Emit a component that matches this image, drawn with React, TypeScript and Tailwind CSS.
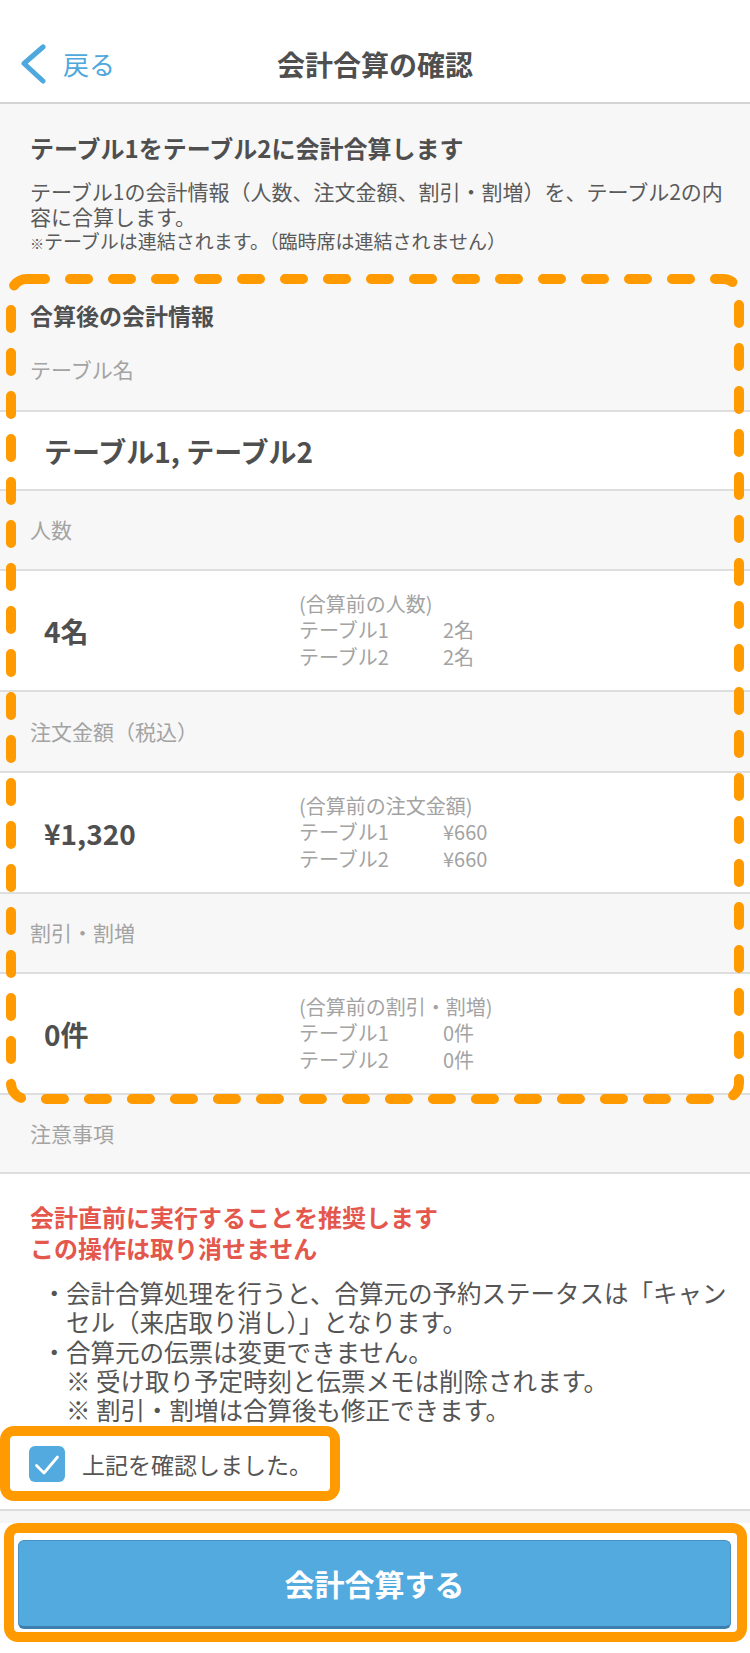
import { ReactNode } from "react";

const Label = ({ children, h }: { children: ReactNode; h: string }) => (
  <div className={`flex items-center border-t-2 border-[#dedede] bg-[#f7f7f7] pl-[30px] text-[21px] text-[#a3a3a3] ${h}`}>
    {children}
  </div>
);

type Before = { title: string; t1: string; t2: string };

const ValueRow = ({ value, before }: { value: string; before: Before }) => (
  <div className="flex h-[121px] items-center border-t-2 border-[#dedede] bg-white">
    <div className="w-[299px] pl-[44px] text-[28px] font-bold text-[#4f4f4f]">{value}</div>
    <div className="text-[20px] leading-[26.5px] text-[#a3a3a3]">
      <div>{before.title}</div>
      <div className="grid grid-cols-[144px_auto]">
        <span>テーブル1</span>
        <span>{before.t1}</span>
        <span>テーブル2</span>
        <span>{before.t2}</span>
      </div>
    </div>
  </div>
);

// annotation drawn over the merged-info block
const DashedFrame = () => (
  <svg
    className="pointer-events-none absolute left-0 top-[24px] overflow-visible"
    width="750"
    height="830"
  >
    <rect
      x="11"
      y="0"
      width="728"
      height="820"
      rx="16"
      fill="none"
      stroke="#ff9a00"
      strokeWidth="10"
      strokeLinecap="round"
      strokeDasharray="18 25"
    />
  </svg>
);

export default function App() {
  return (
    <div className="min-h-[1653px] w-[750px] bg-white font-['Noto_Sans_CJK_JP','Noto_Sans',sans-serif] text-[#4f4f4f]">
      {/* nav bar */}
      <header className="grid h-[104px] grid-cols-[1fr_auto_1fr] items-end border-b-2 border-[#d4d4d4] bg-white pb-[18px]">
        <div className="flex items-center pl-[20px] text-[#4ea8de]">
          <svg width="28" height="40" viewBox="0 0 28 40">
            <polyline
              points="23,3 4,19.5 23,37"
              fill="none"
              stroke="#4ea8de"
              strokeWidth="5"
              strokeLinecap="round"
              strokeLinejoin="round"
            />
          </svg>
          <span className="ml-[15px] text-[26px] leading-[40px]">戻る</span>
        </div>
        <h1 className="text-[28px] font-bold leading-[40px] text-[#4f4f4f]">会計合算の確認</h1>
        <div />
      </header>

      <section className="bg-[#f7f7f7] px-[30px] pt-[29px]">
        <h2 className="text-[24px] font-bold leading-[30px]">テーブル1をテーブル2に会計合算します</h2>
        <p className="mt-[16px] whitespace-nowrap text-[21px] leading-[25px] text-[#5a5a5a]">
          テーブル1の会計情報（人数、注文金額、割引・割増）を、テーブル2の内
          <br />
          容に合算します。
        </p>
        <p className="whitespace-nowrap text-[19px] leading-[24px] text-[#5a5a5a]">
          <span className="text-[14px]">※</span>テーブルは連結されます。（臨時席は連結されません）
        </p>
      </section>

      <div className="relative">
        <DashedFrame />
        <div className="bg-[#f7f7f7] px-[30px] pt-[45px] text-[23px] font-bold leading-[30px]">合算後の会計情報</div>
        <div className="flex h-[80px] items-center bg-[#f7f7f7] pl-[30px] text-[21px] text-[#a3a3a3]">テーブル名</div>
        <div className="flex h-[79px] items-center border-t-2 border-[#dedede] bg-white pl-[44px] text-[28px] font-bold text-[#4f4f4f]">
          テーブル1, テーブル2
        </div>
        <Label h="h-[80px]">人数</Label>
        <ValueRow value="4名" before={{ title: "(合算前の人数)", t1: "2名", t2: "2名" }} />
        <Label h="h-[81px]">注文金額（税込）</Label>
        <ValueRow value="¥1,320" before={{ title: "(合算前の注文金額)", t1: "¥660", t2: "¥660" }} />
        <Label h="h-[80px]">割引・割増</Label>
        <ValueRow value="0件" before={{ title: "(合算前の割引・割増)", t1: "0件", t2: "0件" }} />
      </div>

      <Label h="h-[79px]">注意事項</Label>

      <section className="border-t-2 border-[#dedede] bg-white pt-[27px]">
        <div className="px-[30px] text-[24px] font-bold leading-[31px] text-[#e4574c]">
          <p>会計直前に実行することを推奨します</p>
          <p>この操作は取り消せません</p>
        </div>
        <ul className="mt-[15px] whitespace-nowrap pl-[42px] text-[24.5px] leading-[29.3px] text-[#555555]">
          <li className="flex">
            <span className="w-[24px]">・</span>
            <span>
              会計合算処理を行うと、合算元の予約ステータスは「キャン
              <br />
              セル（来店取り消し）」となります。
            </span>
          </li>
          <li className="flex">
            <span className="w-[24px]">・</span>
            <span>
              合算元の伝票は変更できません。
              <br />※ 受け取り予定時刻と伝票メモは削除されます。
              <br />※ 割引・割増は合算後も修正できます。
            </span>
          </li>
        </ul>

        <label className="mt-[2px] flex h-[75px] w-[340px] items-center rounded-[14px] border-[10px] border-[#ff9a00] pl-[19px]">
          <span className="flex h-[36px] w-[36px] items-center justify-center rounded-[6px] bg-[#53aadf]">
            <svg width="36" height="36" viewBox="0 0 36 36">
              <polyline
                points="7.5,19.5 15,27 28.5,11"
                fill="none"
                stroke="white"
                strokeWidth="2.8"
                strokeLinecap="round"
                strokeLinejoin="round"
              />
            </svg>
          </span>
          <span className="ml-[17px] text-[23px] text-[#555555]">上記を確認しました。</span>
        </label>

        <div className="mt-[8px] h-[14px] border-t-2 border-[#dcdcdc] bg-[#f5f5f5]" />

        <div className="ml-[4px] h-[119px] w-[743px] rounded-[14px] border-[10px] border-[#ff9a00] bg-white pb-[3px] pl-[4px] pr-[6px] pt-[7px]">
          <button className="flex h-[89px] w-full items-center justify-center rounded-[6px] border border-b-[3px] border-[#4a90c2] border-b-[#3c7eae] bg-[#53aadf] text-[30px] font-bold text-white">
            会計合算する
          </button>
        </div>
      </section>
    </div>
  );
}
